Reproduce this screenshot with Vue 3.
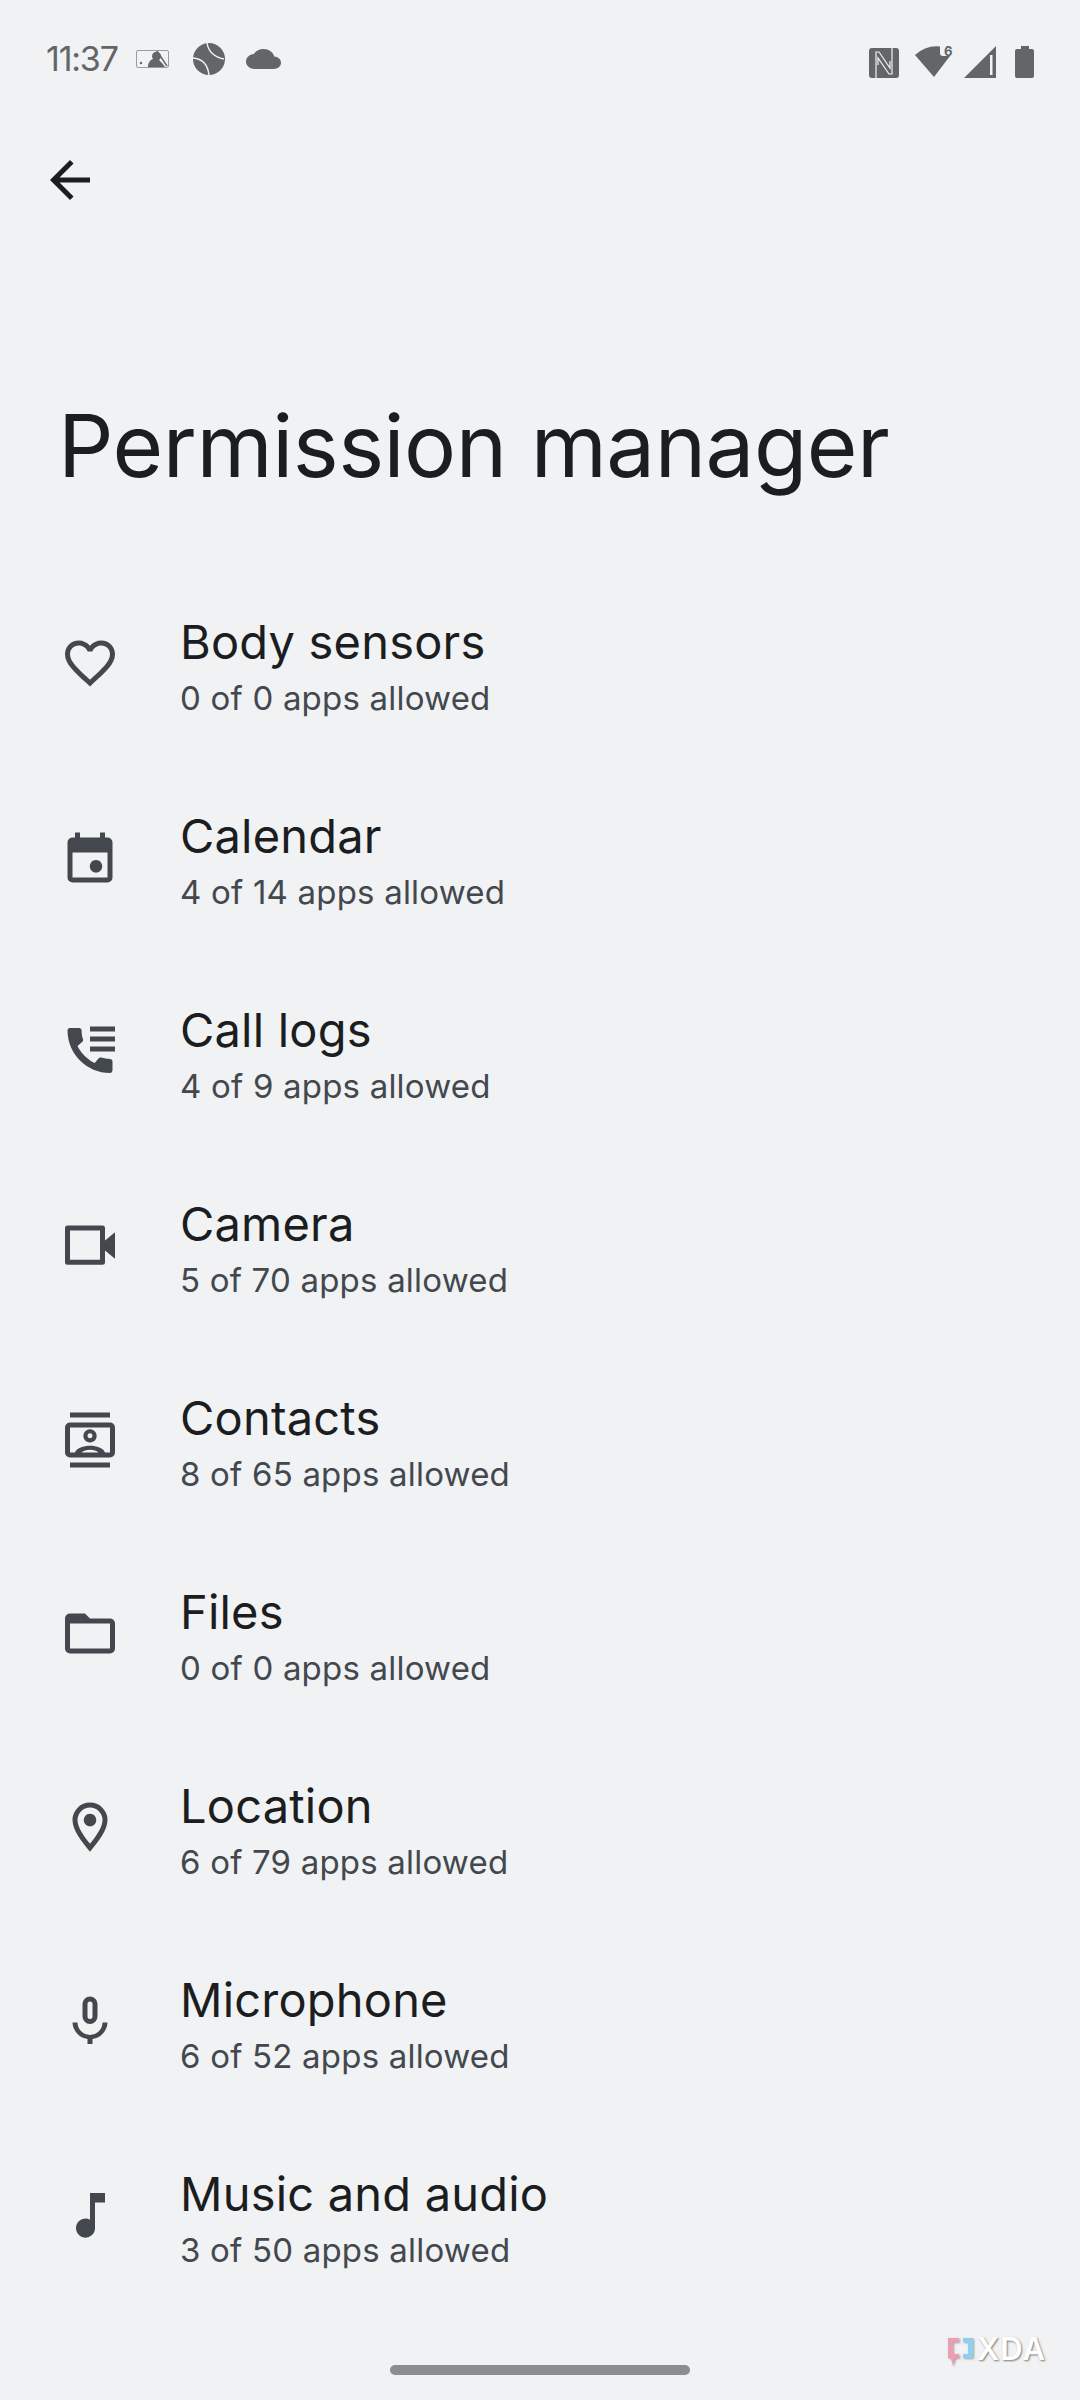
<template>
	<div class="page">
		<div class="status-bar">
			<div class="status-left">
				<span class="clock">11:37</span>
				<svg class="mlb" width="34" height="18" viewBox="0 0 34 18">
					<rect x="0.5" y="0.5" width="32" height="17" rx="1.5" fill="none" stroke="#9a9c9f" />
					<circle cx="5" cy="13" r="1.2" fill="#636567" />
					<path d="M12 17c0-4 2-7 5-8a4.500 4.500 0 1 1 6 1l3 3 3 4z" fill="#636567" />
					<path d="M21 1l10 15" fill="none" stroke="#636567" stroke-width="1.400" />
				</svg>
				<svg class="ball" width="32" height="32" viewBox="0 0 32 32">
					<circle cx="16" cy="16" r="16" fill="#636567" />
					<path d="M14 0Q16 13 31 16M0 15Q14 16 16 32" fill="none" stroke="#f0f2f4" stroke-width="1.4" />
				</svg>
				<svg class="cloud" width="35" height="20" viewBox="0 4 24 16" preserveAspectRatio="none">
					<path fill="#636567" d="M19.35 10.04C18.67 6.59 15.64 4 12 4 9.11 4 6.6 5.64 5.35 8.04 2.34 8.36 0 10.91 0 14c0 3.31 2.69 6 6 6h13c2.76 0 5-2.24 5-5 0-2.64-2.05-4.78-4.65-4.96z" />
				</svg>
			</div>
			<div class="status-right">
				<svg class="nfc" width="30" height="30" viewBox="0 0 30 30">
					<rect width="30" height="30" rx="3" fill="#636567" />
					<path d="M7 30V4h3l11 16v-7M23 0v26h-3L9 10v7" fill="none" stroke="#f0f2f4" stroke-width="1.2" />
				</svg>
				<svg class="wifi" width="38" height="37" viewBox="0 -4 38 37">
					<path fill="#636567" d="M0 10Q11 0 25 1.5V8Q25 11 28 11H35L19 32Z" />
					<text x="29" y="11" class="wifi-six">6</text>
				</svg>
				<svg class="signal" width="32" height="32" viewBox="0 0 32 32">
					<path fill="#636567" d="M0 32L32 0V32Z" />
					<rect x="26" y="9" width="2.5" height="20" fill="#f0f2f4" />
				</svg>
				<svg class="battery" width="19" height="32" viewBox="0 0 19 32">
					<path fill="#636567" d="M6 0h8v3h3a2 2 0 0 1 2 2v25a2 2 0 0 1-2 2H2a2 2 0 0 1-2-2V5a2 2 0 0 1 2-2h4z" />
				</svg>
			</div>
		</div>

		<button class="back-btn">
			<svg width="60" height="60" viewBox="0 0 24 24">
				<path fill="#1b1d20" d="M20 11H7.83l5.59-5.59L12 4l-8 8 8 8 1.41-1.41L7.83 13H20v-2z" />
			</svg>
		</button>

		<h1 class="page-title">Permission manager</h1>

		<div class="perm-list">
			<div v-for="perm in permissions" :key="perm.name" class="perm-row">
				<svg class="perm-icon" width="60" height="60" viewBox="0 0 24 24">
					<path :d="perm.icon" :transform="perm.shift" fill-rule="evenodd" />
				</svg>
				<div class="perm-text">
					<div class="perm-name">{{ perm.name }}</div>
					<div class="perm-count">{{ perm.allowed }} of {{ perm.total }} apps allowed</div>
				</div>
			</div>
		</div>

		<div class="gesture-bar"></div>

		<div class="watermark">
			<svg class="watermark-mark" width="27" height="30" viewBox="0 0 27 30">
				<path fill="#ee9db2" d="M1 1h11v4H6v12h6v4H8l-2 8-2-8H1z" />
				<path fill="#8fd0f2" d="M16 1h10v20H16v-4h5V5h-5z" />
			</svg>
			<span class="watermark-text">XDA</span>
		</div>
	</div>
</template>

<script setup>
const permissions = [
	{
		name: 'Body sensors',
		allowed: 0,
		total: 0,
		shift: 'translate(0 -1.2)',
		icon: 'M16.5 3c-1.74 0-3.41.81-4.5 2.09C10.91 3.81 9.24 3 7.5 3 4.42 3 2 5.42 2 8.5c0 3.78 3.4 6.86 8.55 11.54L12 21.35l1.45-1.32C18.6 15.36 22 12.28 22 8.5 22 5.42 19.58 3 16.5 3zm-4.4 15.55l-.1.1-.1-.1C7.14 14.24 4 11.39 4 8.5 4 6.5 5.5 5 7.5 5c1.54 0 3.04.99 3.57 2.36h1.87C13.46 5.99 14.96 5 16.5 5c2 0 3.5 1.5 3.5 3.5 0 2.89-3.14 5.74-7.9 10.05z'
	},
	{
		name: 'Calendar',
		allowed: 4,
		total: 14,
		icon: 'M6 1h2v2h8V1h2v2h1a2 2 0 0 1 2 2v14a2 2 0 0 1-2 2H5a2 2 0 0 1-2-2V5a2 2 0 0 1 2-2h1zM5 9v10h14V9zM14.4 12a2.5 2.5 0 1 0 .01 0z'
	},
	{
		name: 'Call logs',
		allowed: 4,
		total: 9,
		shift: 'translate(0 -1.4)',
		icon: 'M20.01 15.38c-1.23 0-2.42-.2-3.53-.56-.35-.12-.74-.03-1.01.24l-1.57 1.97c-2.83-1.35-5.48-3.9-6.89-6.83l1.95-1.66c.27-.28.35-.67.24-1.02-.37-1.11-.56-2.3-.56-3.53 0-.54-.45-.99-.99-.99H4.19C3.65 3 3 3.24 3 3.99 3 13.28 10.73 21 20.01 21c.71 0 .99-.63.99-1.18v-3.45c0-.54-.45-.99-.99-.99zM12 2.4h10v2H12zM12 6.4h10v2H12zM12 10.4h10v2H12z'
	},
	{
		name: 'Camera',
		allowed: 5,
		total: 70,
		icon: 'M3 3h14a1 1 0 0 1 1 1v13.7a1 1 0 0 1-1 1H3a1 1 0 0 1-1-1V4a1 1 0 0 1 1-1zM4 5v11.7h12V5zM18 9l4-3.3v10.6L18 13z'
	},
	{
		name: 'Contacts',
		allowed: 8,
		total: 65,
		icon: 'M4 .2h16v2H4zM4 20.2h16v2H4zM4 4.2h16a2 2 0 0 1 2 2v10a2 2 0 0 1-2 2H4a2 2 0 0 1-2-2v-10a2 2 0 0 1 2-2zM4 6.2v10h16v-10zM12 6.900a2.650 2.650 0 1 0 .01 0zM12 8.500a1 1 0 1 1-.01 0zM6 16.200c.5-1.800 3.500-2.700 6-2.700s5.500.9 6 2.700h-2.600c-.8-.8-2-1.100-3.400-1.100s-2.600.3-3.400 1.100z'
	},
	{
		name: 'Files',
		allowed: 0,
		total: 0,
		icon: 'M4 3h6l2 2h8a2 2 0 0 1 2 2v10a2 2 0 0 1-2 2H4a2 2 0 0 1-2-2V5a2 2 0 0 1 2-2zM4 7v10h16V7z'
	},
	{
		name: 'Location',
		allowed: 6,
		total: 79,
		icon: 'M12 1a7 7 0 0 0-7 7c0 4 3.500 8.500 7 12.700 3.500-4.200 7-8.700 7-12.700a7 7 0 0 0-7-7zM12 3a5 5 0 0 1 5 5c0 2.800-2.400 6.300-5 9.500-2.600-3.200-5-6.700-5-9.500a5 5 0 0 1 5-5zM12 5.500a2.500 2.500 0 1 0 .01 0z'
	},
	{
		name: 'Microphone',
		allowed: 6,
		total: 52,
		icon: 'M12 1a3 3 0 0 1 3 3v5a3 3 0 0 1-6 0V4a3 3 0 0 1 3-3zM12 3a1 1 0 0 0-1 1v5a1 1 0 0 0 2 0V4a1 1 0 0 0-1-1zM5 11.400h2a5 5 0 0 0 10 0h2a7 7 0 0 1-6 6.600V20h-2v-2a7 7 0 0 1-6-6.600z'
	},
	{
		name: 'Music and audio',
		allowed: 3,
		total: 50,
		icon: 'M12 2h6v3.800h-4V16a3.800 3.800 0 1 1-2-3.300z'
	}
]
</script>

<style scoped>
.page {
	position: relative;
	width: 1080px;
	height: 2400px;
	overflow: hidden;
	background: #f0f2f4;
	font-family: Inter, "Liberation Sans", sans-serif;
}

.status-bar {
	display: flex;
	justify-content: space-between;
	align-items: center;
	height: 32px;
	padding: 43px 46px 0 46px;
	color: #636567;
}

.status-left {
	display: flex;
	align-items: center;
}

.status-right {
	display: flex;
	align-items: flex-end;
}

.clock {
	width: 90px;
	font-size: 34px;
	line-height: 32px;
	letter-spacing: -1.2px;
}

.ball {
	margin-left: 23px;
}

.cloud {
	margin-left: 21px;
}

.wifi {
	margin-left: 16px;
}

.signal {
	margin-left: 11px;
}

.battery {
	margin-left: 19px;
}

.wifi-six {
	font-size: 13px;
	font-weight: 700;
	fill: #636567;
}

.back-btn {
	display: block;
	width: 60px;
	height: 60px;
	margin: 75px 0 0 40px;
	padding: 0;
	border: none;
	background: none;
}

.page-title {
	margin: 181px 0 0 58px;
	font-size: 87px;
	line-height: 110px;
	letter-spacing: -.5px;
	font-weight: 400;
	color: #1b1d20;
}

.perm-list {
	display: flex;
	flex-direction: column;
	margin-top: 67.5px;
}

.perm-row {
	display: flex;
	align-items: center;
	height: 194px;
	padding-left: 60px;
}

.perm-icon {
	flex: none;
	fill: #43484e;
}

.perm-text {
	margin-left: 60px;
	padding-top: 4px;
}

.perm-name {
	font-size: 47px;
	line-height: 60px;
	letter-spacing: .2px;
	color: #1b1d20;
}

.perm-count {
	font-size: 33px;
	line-height: 52px;
	letter-spacing: .2px;
	color: #43484e;
}

.gesture-bar {
	width: 300px;
	height: 10px;
	margin: 50px auto 0;
	border-radius: 5px;
	background: #8c8d8f;
}

.watermark {
	position: absolute;
	left: 947px;
	top: 2337px;
	display: flex;
	align-items: flex-start;
}

.watermark-mark {
	filter: drop-shadow(1px 1px 1px rgba(0, 0, 0, .35));
}

.watermark-text {
	margin-left: 3px;
	font-size: 31px;
	line-height: 24px;
	font-weight: 600;
	letter-spacing: 1px;
	color: #fff;
	text-shadow: 1px 1px 2px rgba(0, 0, 0, .5);
}
</style>
